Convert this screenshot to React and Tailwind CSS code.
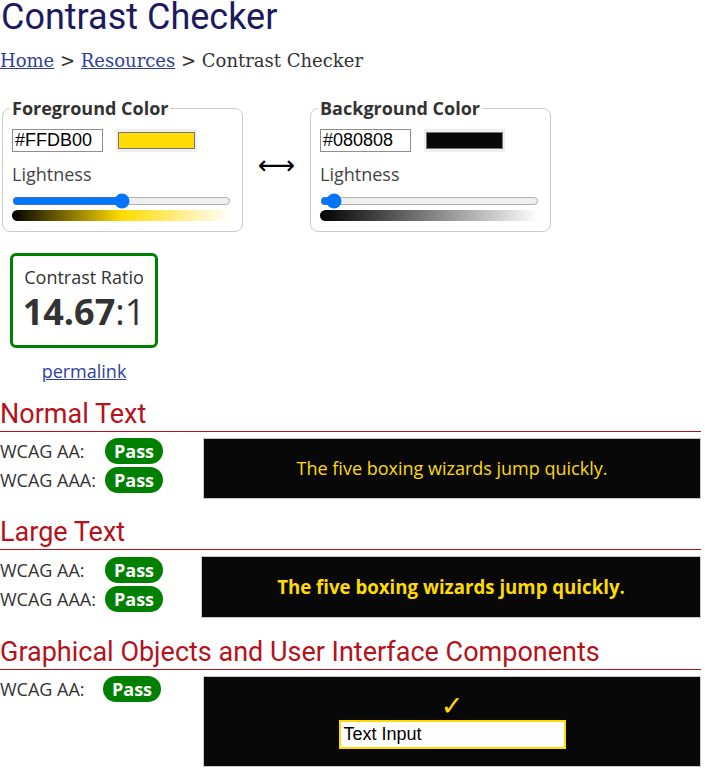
import React from "react";

const sans = "font-['Open_Sans',sans-serif]";

function ColorFieldset({ legend, hex, swatch, value, gradient }) {
  return (
    <fieldset className="w-[241px] border border-[#cccccc] rounded-[8px] pl-[9px] pr-[10px] pb-[10px] pt-0 m-0">
      <legend className="px-[2px] -ml-[2px] text-[18px] font-bold text-[#333333] leading-[24px]">{legend}</legend>
      <div className="flex items-center gap-[13px] mt-[9px]">
        <div className="w-[91px] h-[23px] border border-[#8f8f8f] bg-white flex items-center pl-[2px] font-['Liberation_Sans',Arial,sans-serif] text-[18px] text-black">
          {hex}
        </div>
        <div className="w-[81px] h-[23px] bg-[#efefef] px-[2px] py-[3px] flex">
          <div className="flex-1 border border-[#767676]" style={{ background: swatch }} />
        </div>
      </div>
      <div className="mt-[10px] text-[18px] leading-[25px] text-[#444444]">Lightness</div>
      <input
        type="range"
        min="0"
        max="100"
        defaultValue={value}
        className="block w-[219px] m-0 mt-[6px] h-[16px]"
      />
      <div className="mt-[1px] h-[11px] w-[219px] rounded-[6px]" style={{ background: gradient }} />
    </fieldset>
  );
}

function Pass() {
  return (
    <span className="inline-flex items-center justify-center w-[58px] h-[26px] rounded-full bg-[#008000] text-white font-bold text-[18px] leading-none">
      Pass
    </span>
  );
}

function Row({ label, labelW = "w-[105px]" }) {
  return (
    <div className="flex items-center h-[26px]">
      <span className={`${labelW} text-[18px] text-[#333333]`}>{label}</span>
      <Pass />
    </div>
  );
}

function Heading({ children }) {
  return (
    <h2 className="font-['Roboto',sans-serif] text-[27px] leading-[32px] text-[#b5121b] border-b border-[#b5121b] pb-[1px]">
      {children}
    </h2>
  );
}

export default function App() {
  return (
    <div className={`${sans} w-[701px] bg-white text-[#333333]`}>
      <h1 className="font-['Roboto',sans-serif] text-[36px] leading-[34px] text-[#1b1a5e] pl-[1px]">Contrast Checker</h1>
      <div className="mt-[17px] font-['DejaVu_Serif',serif] text-[18px] leading-[20px] text-[#333333]">
        <a href="#" className="text-[#2f3f9f] underline">Home</a> &gt;{" "}
        <a href="#" className="text-[#2f3f9f] underline">Resources</a> &gt; Contrast Checker
      </div>

      <div className="flex items-center mt-[25px] pl-[2px]">
        <ColorFieldset
          legend="Foreground Color"
          hex="#FFDB00"
          swatch="#FFDB00"
          value={50}
          gradient="linear-gradient(to right, #000000, #FFDB00, #ffffff)"
        />
        <div className="w-[67px] flex justify-center font-['DejaVu_Sans',sans-serif] text-[26px] text-black pt-[2px]">⟷</div>
        <ColorFieldset
          legend="Background Color"
          hex="#080808"
          swatch="#080808"
          value={3}
          gradient="linear-gradient(to right, #000000, #808080, #ffffff)"
        />
      </div>

      <div className="ml-[10px] mt-[21px] w-[148px] flex flex-col items-center">
        <div className="w-[148px] h-[95px] border-[3px] border-[#008000] rounded-[6px] flex flex-col items-center pt-[9px]">
          <div className="text-[18px] leading-[24px] text-[#333333]">Contrast Ratio</div>
          <div className="text-[36px] leading-[46px] text-[#333333]">
            <span className="font-bold">14.67</span>:1
          </div>
        </div>
        <a href="#" className="mt-[11px] text-[18px] leading-[24px] text-[#2f3f9f] underline">permalink</a>
      </div>

      <div className="mt-[15px]">
        <Heading>Normal Text</Heading>
        <div className="flex mt-[6px]">
          <div className="w-[203px] flex flex-col gap-[3px]">
            <Row label="WCAG AA:" />
            <Row label="WCAG AAA:" />
          </div>
          <div className="flex-1 h-[61px] bg-[#080808] border border-[#c8c8c8] flex items-center justify-center text-[#FFDB00] text-[18px]">
            The five boxing wizards jump quickly.
          </div>
        </div>
      </div>

      <div className="mt-[17px]">
        <Heading>Large Text</Heading>
        <div className="flex mt-[6px]">
          <div className="w-[201px] flex flex-col gap-[3px] pt-[1px]">
            <Row label="WCAG AA:" />
            <Row label="WCAG AAA:" />
          </div>
          <div className="flex-1 h-[62px] bg-[#080808] border border-[#c8c8c8] flex items-center justify-center text-[#FFDB00] text-[18.67px] font-bold">
            The five boxing wizards jump quickly.
          </div>
        </div>
      </div>

      <div className="mt-[18px]">
        <Heading>Graphical Objects and User Interface Components</Heading>
        <div className="flex mt-[6px]">
          <div className="w-[203px]">
            <Row label="WCAG AA:" labelW="w-[103px]" />
          </div>
          <div className="flex-1 h-[91px] bg-[#080808] border border-[#c8c8c8] flex flex-col items-center pt-[15px]">
            <div className="font-['DejaVu_Sans',sans-serif] text-[27px] leading-[28px] text-[#FFDB00]">✓</div>
            <div className="mt-[0px] w-[227px] h-[29px] border-[2px] border-[#FFDB00] bg-white flex items-center pl-[3px] font-['Liberation_Sans',Arial,sans-serif] text-[18px] text-black">
              Text Input
            </div>
          </div>
        </div>
      </div>
    </div>
  );
}
